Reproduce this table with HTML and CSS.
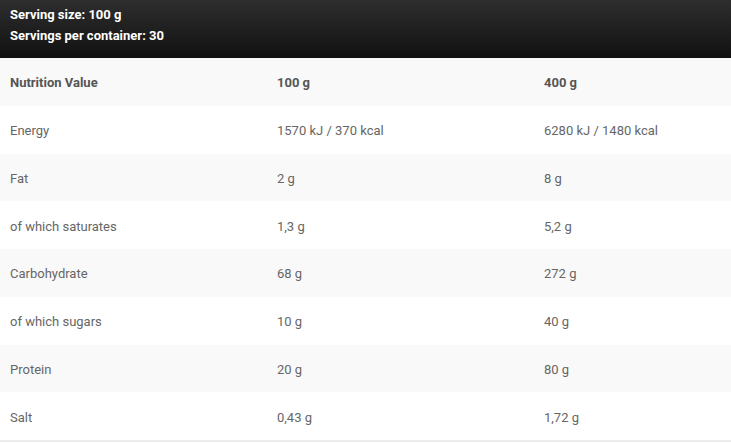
FILE: index.html
```html
<!DOCTYPE html>
<html>
<head>
<meta charset="utf-8">
<link rel="stylesheet" href="styles.css">
</head>
<body>
<div class="box">
  <div class="top">
    <div>Serving size: 100 g</div>
    <div>Servings per container: 30</div>
  </div>
  <table class="nt">
    <thead>
      <tr><th>Nutrition Value</th><th>100 g</th><th>400 g</th></tr>
    </thead>
    <tbody>
      <tr><td>Energy</td><td>1570 kJ / 370 kcal</td><td>6280 kJ / 1480 kcal</td></tr>
      <tr><td>Fat</td><td>2 g</td><td>8 g</td></tr>
      <tr><td>of which saturates</td><td>1,3 g</td><td>5,2 g</td></tr>
      <tr><td>Carbohydrate</td><td>68 g</td><td>272 g</td></tr>
      <tr><td>of which sugars</td><td>10 g</td><td>40 g</td></tr>
      <tr><td>Protein</td><td>20 g</td><td>80 g</td></tr>
      <tr><td>Salt</td><td>0,43 g</td><td>1,72 g</td></tr>
    </tbody>
  </table>
</div>
</body>
</html>
```
FILE: styles.css
```css
html, body { margin: 0; padding: 0; background: #fff; }
body { font-family: Roboto, "Liberation Sans", sans-serif; font-size: 13px; }
.box { width: 731px; border-bottom: 2px solid #ececec; }
.top {
  height: 58px;
  box-sizing: border-box;
  padding: 4px 10px 0;
  background: linear-gradient(#2e2e2e, #111);
  color: #fff;
  font-weight: bold;
  line-height: 21px;
}
.nt { width: 100%; border-collapse: collapse; table-layout: fixed; }
.nt th, .nt td {
  height: 47.75px;
  padding: 2px 10px 0;
  text-align: left;
  color: #666;
  box-sizing: border-box;
}
.nt th { color: #555; font-weight: bold; }
.nt th:nth-child(1), .nt td:nth-child(1) { width: 267px; }
.nt th:nth-child(2), .nt td:nth-child(2) { width: 267px; }
.nt thead tr, .nt tbody tr:nth-child(even) { background: #f9f9f9; }
.nt tbody tr:nth-child(odd) { background: #fff; }
```
